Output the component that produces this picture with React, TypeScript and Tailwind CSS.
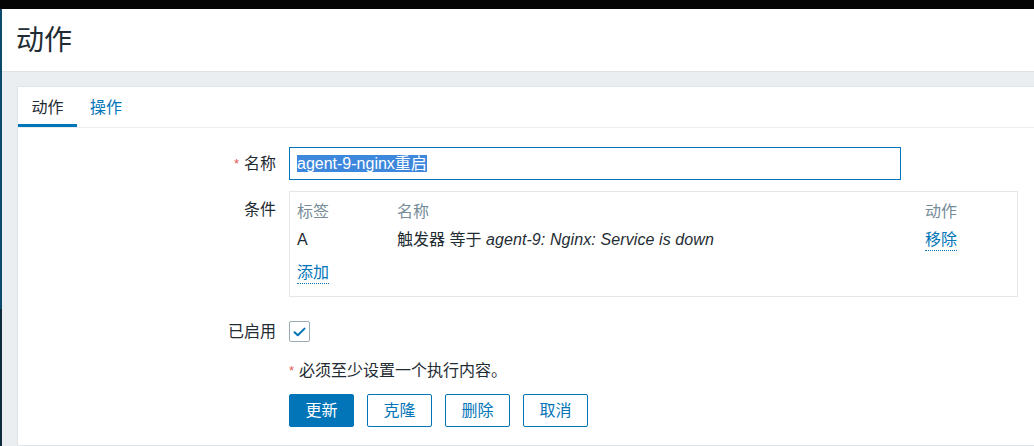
const conditions = [
  {
    label: "A",
    name: "触发器 等于 ",
    value: "agent-9: Nginx: Service is down",
  },
];

const buttons = [
  { text: "更新", primary: true },
  { text: "克隆", primary: false },
  { text: "删除", primary: false },
  { text: "取消", primary: false },
];

export default function App() {
  return (
    <div
      className="h-[446px] w-[1034px] overflow-hidden bg-[#ebeef0] text-[#1f2c33]"
      style={{ fontFamily: '"Liberation Sans", "Noto Sans CJK SC", sans-serif' }}
    >
      <div className="h-[9px] bg-[#050505]" />
      <div className="flex h-[437px]">
        {/* sidebar edge */}
        <div className="flex w-[2px] flex-col">
          <div className="h-[300px] bg-[#0b4a6d]" />
          <div className="flex-1 bg-[#0f2a3d]" />
        </div>

        <div className="flex flex-1 flex-col">
          <header className="flex h-[63px] items-center border-b border-[#dde2e5] bg-white pt-[2px] pl-[14px]">
            <h1 className="text-[28px] leading-none font-normal">动作</h1>
          </header>

          <main className="flex-1 pt-[14px] pl-[15px]">
            <section className="h-[360px] border border-r-0 border-[#dfe4e7] bg-white">
              <nav className="flex h-[41px] border-b border-[#ebeef0] text-[16px]">
                <div className="flex w-[59px] items-center justify-center border-b-[3px] border-[#0275b8] pt-[5px]">
                  动作
                </div>
                <div className="flex items-center px-[13px] pt-[2px] text-[#0275b8]">
                  操作
                </div>
              </nav>

              <div className="grid grid-cols-[258px_1fr] gap-x-[13px] pt-[19px] text-[16px]">
                <div className="flex h-[33px] items-center justify-end">
                  <span className="mr-[5px] text-[13px] text-[#e45959]">*</span>
                  名称
                </div>
                <div className="flex h-[33px] w-[612px] items-center border border-[#0275b8] px-[7px]">
                  <span className="bg-[#3d87dd] leading-[17px] text-white">
                    agent-9-nginx重启
                  </span>
                </div>

                <div className="flex justify-end pt-[18px]">条件</div>
                <div className="mt-[11px] h-[106px] w-[729px] border border-[#e4e7ea] px-[7px] pt-[9px]">
                  <div className="flex h-[22px] items-center text-[#768d99]">
                    <span className="w-[100px]">标签</span>
                    <span className="w-[528px]">名称</span>
                    <span>动作</span>
                  </div>
                  {conditions.map((row) => (
                    <div key={row.label} className="mt-[6px] flex h-[22px] items-center">
                      <span className="w-[100px]">{row.label}</span>
                      <span className="w-[528px]">
                        {row.name}
                        <em className="tracking-[0.1px]">{row.value}</em>
                      </span>
                      <span className="border-b border-dotted border-[#0275b8] leading-[20px] text-[#0275b8]">
                        移除
                      </span>
                    </div>
                  ))}
                  <div className="mt-[12px] flex">
                    <span className="border-b border-dotted border-[#0275b8] leading-[20px] text-[#0275b8]">
                      添加
                    </span>
                  </div>
                </div>

                <div className="mt-[24px] flex h-[21px] items-center justify-end">已启用</div>
                <div className="mt-[24px] flex h-[21px]">
                  <div className="flex h-[21px] w-[21px] items-center justify-center rounded-[2px] border border-[#9aabb4]">
                    <svg width="13" height="10" viewBox="0 0 13 10" fill="none">
                      <path
                        d="M1.5 5.2 L4.8 8.3 L11.5 1.6"
                        stroke="#0275b8"
                        strokeWidth="2"
                        strokeLinecap="round"
                        strokeLinejoin="round"
                      />
                    </svg>
                  </div>
                </div>

                <div />
                <div className="mt-[18px] flex h-[22px] items-center">
                  <span className="mr-[5px] text-[13px] text-[#e45959]">*</span>
                  必须至少设置一个执行内容。
                </div>

                <div />
                <div className="mt-[12px] flex gap-[13px]">
                  {buttons.map((b) => (
                    <button
                      key={b.text}
                      className={
                        b.primary
                          ? "h-[33px] w-[65px] rounded-[2px] border border-[#0275b8] bg-[#0275b8] text-white"
                          : "h-[33px] w-[65px] rounded-[2px] border border-[#0275b8] bg-white text-[#0275b8]"
                      }
                    >
                      {b.text}
                    </button>
                  ))}
                </div>
              </div>
            </section>
          </main>
        </div>
      </div>
    </div>
  );
}
